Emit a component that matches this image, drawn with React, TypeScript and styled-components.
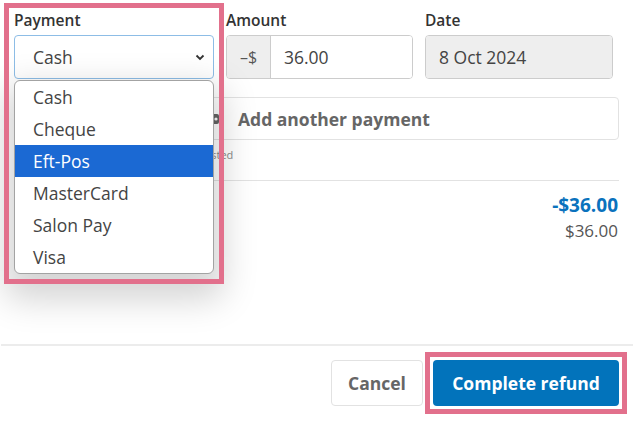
import React from "react";
import styled, { createGlobalStyle } from "styled-components";

const Global = createGlobalStyle`
  html, body { margin: 0; padding: 0; background: #fff; }
  body { font-family: "Open Sans", "Noto Sans", sans-serif; color: #333; }
  * { box-sizing: border-box; }
`;

const PINK = "#e2708c";

const Page = styled.div`
  width: 633px;
  height: 421px;
  display: flex;
  flex-direction: column;
  overflow: hidden;
  position: relative;
`;

const Body = styled.div`
  flex: 1;
  padding: 10px 14px 0 14px;
  display: flex;
  flex-direction: column;
`;

const FieldRow = styled.div`
  display: grid;
  grid-template-columns: 200px 187px 188px;
  column-gap: 12px;
`;

const Field = styled.div<{ $front?: boolean }>`
  position: relative;
  display: flex;
  flex-direction: column;
  z-index: ${(p) => (p.$front ? 5 : "auto")};
`;

const Label = styled.div`
  font-size: 15.5px;
  font-weight: 600;
  line-height: 20px;
  color: #333;
  margin-bottom: 5px;
`;

const SelectBox = styled.div`
  height: 44px;
  border: 1px solid #8dbde6;
  border-radius: 4px;
  display: flex;
  align-items: center;
  justify-content: space-between;
  padding: 0 8px 0 18px;
  font-size: 17.5px;
  color: #444;
  background: #fff;
`;

const Menu = styled.ul`
  position: absolute;
  top: 70px;
  left: 0;
  width: 200px;
  margin: 0;
  padding: 0;
  list-style: none;
  background: #fff;
  border: 1px solid #a3a3a3;
  border-radius: 6px;
  overflow: hidden;
  box-shadow: 0 16px 34px 10px rgba(0, 0, 0, 0.17);
`;

const MenuItem = styled.li<{ $active?: boolean }>`
  height: 32px;
  line-height: 32px;
  padding-left: 18px;
  font-size: 17.5px;
  color: ${(p) => (p.$active ? "#fff" : "#444")};
  background: ${(p) => (p.$active ? "#1b69d3" : "transparent")};
`;

const Highlight = styled.div`
  position: absolute;
  top: -7px;
  left: -10px;
  width: 220px;
  height: 281px;
  border: 5px solid ${PINK};
  pointer-events: none;
`;

const InputGroup = styled.div`
  height: 44px;
  display: flex;
  border: 1px solid #ccc;
  border-radius: 4px;
  overflow: hidden;
`;

const Addon = styled.div`
  width: 44px;
  background: #eee;
  border-right: 1px solid #ccc;
  display: flex;
  align-items: center;
  justify-content: center;
  font-size: 16px;
  color: #555;
`;

const InputText = styled.div<{ $disabled?: boolean }>`
  flex: 1;
  display: flex;
  align-items: center;
  padding-left: 13px;
  font-size: 17.5px;
  color: #444;
  background: ${(p) => (p.$disabled ? "#eee" : "#fff")};
`;

const AddRow = styled.div`
  margin-top: 18px;
  display: grid;
  grid-template-columns: 172px 1fr;
  column-gap: 12px;
`;

const AddButton = styled.div`
  grid-column: 2;
  height: 43px;
  border: 1px solid #e2e2e2;
  border-radius: 4px;
  display: flex;
  align-items: center;
  gap: 19px;
  padding-left: 10px;
  font-size: 17.5px;
  font-weight: 700;
  color: #666;
`;

const Caption = styled.div`
  grid-column: 2;
  margin-top: 8px;
  font-size: 11px;
  color: #8a8a8a;
  line-height: 14px;
`;

const Divider = styled.div`
  height: 1px;
  background: #e2e2e2;
  margin-top: 18px;
  width: 605px;
`;

const Totals = styled.div`
  display: flex;
  flex-direction: column;
  align-items: flex-end;
  padding-right: 1px;
  width: 605px;
  margin-top: 11px;
`;

const Total = styled.div<{ $strong?: boolean }>`
  font-size: ${(p) => (p.$strong ? "19px" : "17px")};
  line-height: 26px;
  font-weight: ${(p) => (p.$strong ? 700 : 400)};
  color: ${(p) => (p.$strong ? "#0a72bd" : "#555")};
`;

const Footer = styled.div`
  border-top: 2px solid #ececec;
  margin-left: 1px;
  height: 77px;
  display: flex;
  justify-content: flex-end;
  align-items: flex-start;
  gap: 2px;
  padding: 6px 6px 0 0;
`;

const CancelButton = styled.div`
  margin-top: 8px;
  height: 46px;
  width: 92px;
  border: 1px solid #e2e2e2;
  border-radius: 4px;
  display: flex;
  align-items: center;
  justify-content: center;
  font-size: 17.5px;
  font-weight: 700;
  color: #666;
`;

const ButtonFrame = styled.div`
  border: 5px solid ${PINK};
  padding: 3px;
`;

const PrimaryButton = styled.div`
  height: 46px;
  width: 186px;
  border-radius: 4px;
  background: #0273bb;
  display: flex;
  align-items: center;
  justify-content: center;
  font-size: 17.5px;
  font-weight: 700;
  color: #fff;
`;

const items = ["Cash", "Cheque", "Eft-Pos", "MasterCard", "Salon Pay", "Visa"];

export default function App() {
  return (
    <Page>
      <Global />
      <Body>
        <FieldRow>
          <Field $front>
            <Label>Payment</Label>
            <SelectBox>
              <span>Cash</span>
              <svg width="10" height="7" viewBox="0 0 10 7">
                <path d="M1.5 1.5 L5 5 L8.5 1.5" fill="none" stroke="#333" strokeWidth="1.8" />
              </svg>
            </SelectBox>
            <Menu>
              {items.map((it) => (
                <MenuItem key={it} $active={it === "Eft-Pos"}>
                  {it}
                </MenuItem>
              ))}
            </Menu>
            <Highlight />
          </Field>
          <Field>
            <Label>Amount</Label>
            <InputGroup>
              <Addon>–$</Addon>
              <InputText>36.00</InputText>
            </InputGroup>
          </Field>
          <Field>
            <Label>Date</Label>
            <InputGroup>
              <InputText $disabled>8 Oct 2024</InputText>
            </InputGroup>
          </Field>
        </FieldRow>
        <AddRow>
          <AddButton>
            <svg width="10" height="10" viewBox="0 0 10 10">
              <rect x="0" y="0" width="10" height="10" rx="2" fill="#666" />
              <circle cx="7" cy="5" r="1.6" fill="#fff" />
            </svg>
            <span>Add another payment</span>
          </AddButton>
          <Caption>Posted</Caption>
        </AddRow>
        <Divider />
        <Totals>
          <Total $strong>-$36.00</Total>
          <Total>$36.00</Total>
        </Totals>
      </Body>
      <Footer>
        <CancelButton>Cancel</CancelButton>
        <ButtonFrame>
          <PrimaryButton>Complete refund</PrimaryButton>
        </ButtonFrame>
      </Footer>
    </Page>
  );
}
